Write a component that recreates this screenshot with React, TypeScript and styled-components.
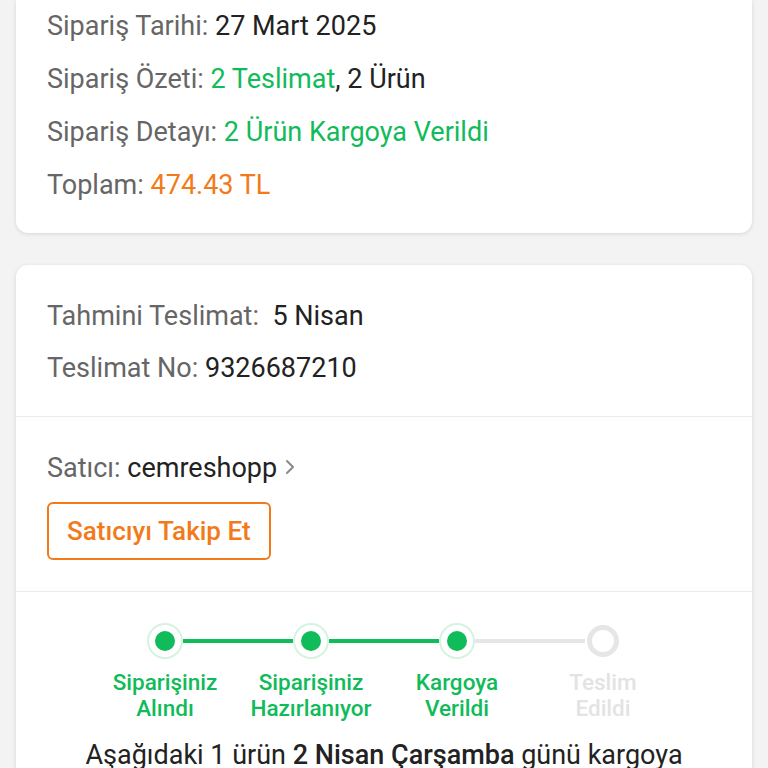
import styled, { createGlobalStyle } from "styled-components";

const green = "#10bb5a";
const orange = "#f27a1a";

const GlobalStyle = createGlobalStyle`
  html, body {
    margin: 0;
    padding: 0;
    background: #f3f3f3;
    font-family: Roboto, "Noto Sans", sans-serif;
  }
  * {
    box-sizing: border-box;
  }
`;

const Page = styled.div`
  display: flex;
  flex-direction: column;
  gap: 32px;
  padding: 0 16px;
  height: 768px;
  overflow: hidden;
`;

const Card = styled.div<{ $flatTop?: boolean }>`
  background: #fff;
  border-radius: ${(p) => (p.$flatTop ? "0 0 12px 12px" : "12px")};
  box-shadow: 0 1px 4px rgba(0, 0, 0, 0.12);
  flex-shrink: 0;
`;

const Section = styled.div<{ $top: number; $bottom: number }>`
  padding: ${(p) => `${p.$top}px 31px ${p.$bottom}px`};
  & + & {
    border-top: 1px solid #ebebeb;
  }
`;

const Row = styled.div<{ $lh?: number }>`
  font-size: 27px;
  line-height: ${(p) => p.$lh ?? 53}px;
  color: #666;
  white-space: nowrap;
`;

const Value = styled.span<{ $tone?: "dark" | "green" | "orange"; $bold?: boolean }>`
  color: ${(p) =>
    p.$tone === "green" ? green : p.$tone === "orange" ? orange : "#222"};
  font-weight: ${(p) => (p.$bold ? 500 : 400)};
`;

const SellerRow = styled(Row)`
  display: flex;
  align-items: center;
  gap: 6px;
`;

const Chevron = styled.svg`
  width: 14px;
  height: 20px;
  margin-top: -2px;
`;

const FollowButton = styled.button`
  margin-top: 8px;
  height: 58px;
  padding: 0 18px;
  border: 2px solid ${orange};
  border-radius: 6px;
  background: #fff;
  color: ${orange};
  font-family: Roboto, sans-serif;
  font-size: 26px;
  font-weight: 500;
`;

const Stepper = styled.div`
  display: grid;
  grid-template-columns: repeat(4, 146px);
  justify-content: center;
`;

const Step = styled.div`
  display: flex;
  flex-direction: column;
  align-items: center;
`;

const Track = styled.div`
  display: flex;
  align-items: center;
  width: 100%;
  height: 36px;
`;

const Line = styled.div<{ $on: boolean; $hidden?: boolean }>`
  flex: 1;
  height: 4px;
  background: ${(p) => (p.$on ? green : "#e6e6e6")};
  visibility: ${(p) => (p.$hidden ? "hidden" : "visible")};
`;

const Dot = styled.div<{ $done: boolean }>`
  width: ${(p) => (p.$done ? 36 : 32)}px;
  height: ${(p) => (p.$done ? 36 : 32)}px;
  margin: ${(p) => (p.$done ? 0 : 2)}px;
  border-radius: 50%;
  flex-shrink: 0;
  display: flex;
  align-items: center;
  justify-content: center;
  background: #fff;
  border: ${(p) => (p.$done ? "2px solid #d6f3e1" : "5px solid #e6e6e6")};
  &::after {
    content: "";
    display: ${(p) => (p.$done ? "block" : "none")};
    width: 20px;
    height: 20px;
    border-radius: 50%;
    background: ${green};
  }
`;

const StepLabel = styled.div<{ $done: boolean }>`
  margin-top: 10px;
  text-align: center;
  font-size: 22.5px;
  line-height: 26px;
  font-weight: 500;
  white-space: nowrap;
  color: ${(p) => (p.$done ? green : "#e3e3e3")};
`;

const Notice = styled.p`
  margin: 18px 0 0;
  text-align: center;
  font-size: 27px;
  line-height: 32px;
  color: #222;
  b {
    font-weight: 500;
  }
`;

const steps = [
  { label: ["Siparişiniz", "Alındı"], done: true },
  { label: ["Siparişiniz", "Hazırlanıyor"], done: true },
  { label: ["Kargoya", "Verildi"], done: true },
  { label: ["Teslim", "Edildi"], done: false },
];

export default function App() {
  return (
    <>
      <GlobalStyle />
      <Page>
        <Card $flatTop>
          <Section $top={0} $bottom={21}>
            <Row>
              Sipariş Tarihi: <Value>27 Mart 2025</Value>
            </Row>
            <Row>
              Sipariş Özeti: <Value $tone="green">2 Teslimat</Value>
              <Value>, 2 Ürün</Value>
            </Row>
            <Row>
              Sipariş Detayı: <Value $tone="green">2 Ürün Kargoya Verildi</Value>
            </Row>
            <Row>
              Toplam: <Value $tone="orange">474.43 TL</Value>
            </Row>
          </Section>
        </Card>

        <Card>
          <Section $top={25} $bottom={22}>
            <Row $lh={52}>
              Tahmini Teslimat:&nbsp; <Value>5 Nisan</Value>
            </Row>
            <Row $lh={52}>
              Teslimat No: <Value>9326687210</Value>
            </Row>
          </Section>
          <Section $top={25} $bottom={31}>
            <SellerRow $lh={52}>
              <span>
                Satıcı: <Value>cemreshopp</Value>
              </span>
              <Chevron viewBox="0 0 14 20" fill="none">
                <path
                  d="M4 4l6 6-6 6"
                  stroke="#8a8a8a"
                  strokeWidth="2"
                  strokeLinecap="round"
                  strokeLinejoin="round"
                />
              </Chevron>
            </SellerRow>
            <FollowButton>Satıcıyı Takip Et</FollowButton>
          </Section>
          <Section $top={31} $bottom={0}>
            <Stepper>
              {steps.map((s, i) => (
                <Step key={i}>
                  <Track>
                    <Line $on={s.done} $hidden={i === 0} />
                    <Dot $done={s.done} />
                    <Line
                      $on={!!steps[i + 1]?.done}
                      $hidden={i === steps.length - 1}
                    />
                  </Track>
                  <StepLabel $done={s.done}>
                    {s.label[0]}
                    <br />
                    {s.label[1]}
                  </StepLabel>
                </Step>
              ))}
            </Stepper>
            <Notice>
              Aşağıdaki 1 ürün <b>2 Nisan Çarşamba</b> günü kargoya verildi.
            </Notice>
          </Section>
        </Card>
      </Page>
    </>
  );
}
